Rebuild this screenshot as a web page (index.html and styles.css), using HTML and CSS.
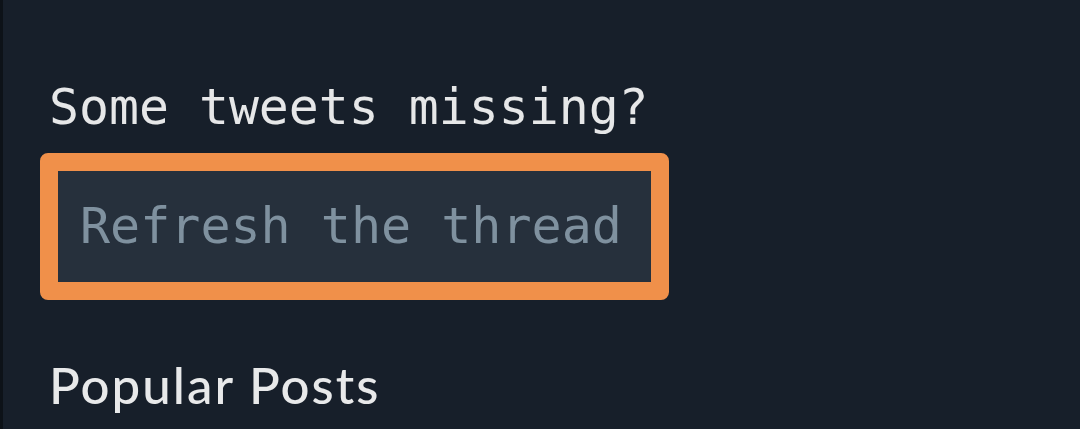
FILE: index.html
```html
<!DOCTYPE html>
<html>
<head>
<meta charset="utf-8">
<link rel="stylesheet" href="styles.css">
</head>
<body>
<div class="edge"></div>
<main class="content">
  <p class="missing">Some tweets missing?</p>
  <button class="refresh">Refresh the thread</button>
  <h2 class="popular">Popular Posts</h2>
</main>
</body>
</html>
```
FILE: styles.css
```css
html, body {
  margin: 0;
  padding: 0;
  background: #171f2a;
  height: 100%;
  overflow: hidden;
}
body {
  display: flex;
}
.edge {
  width: 3px;
  background: #0d1218;
  flex: none;
}
.content {
  flex: 1;
  padding: 77px 0 0 46px;
  display: flex;
  flex-direction: column;
  align-items: flex-start;
}
.missing {
  margin: 0;
  font-family: "DejaVu Sans Mono", monospace;
  font-size: 49.8px;
  line-height: 60px;
  color: #e6e7e8;
}
.refresh {
  margin: 16px 0 0 -9px;
  font-family: "DejaVu Sans Mono", monospace;
  font-size: 50px;
  line-height: 60px;
  color: #7f919f;
  background: #26303c;
  border: 18px solid #f0904a;
  border-radius: 8px;
  padding: 25px 29px 26px 22px;
}
.popular {
  margin: 55px 0 0 0;
  font-family: "Lato", sans-serif;
  font-weight: 500;
  font-size: 51px;
  letter-spacing: 2px;
  line-height: 60px;
  color: #e8e9ea;
}
```
